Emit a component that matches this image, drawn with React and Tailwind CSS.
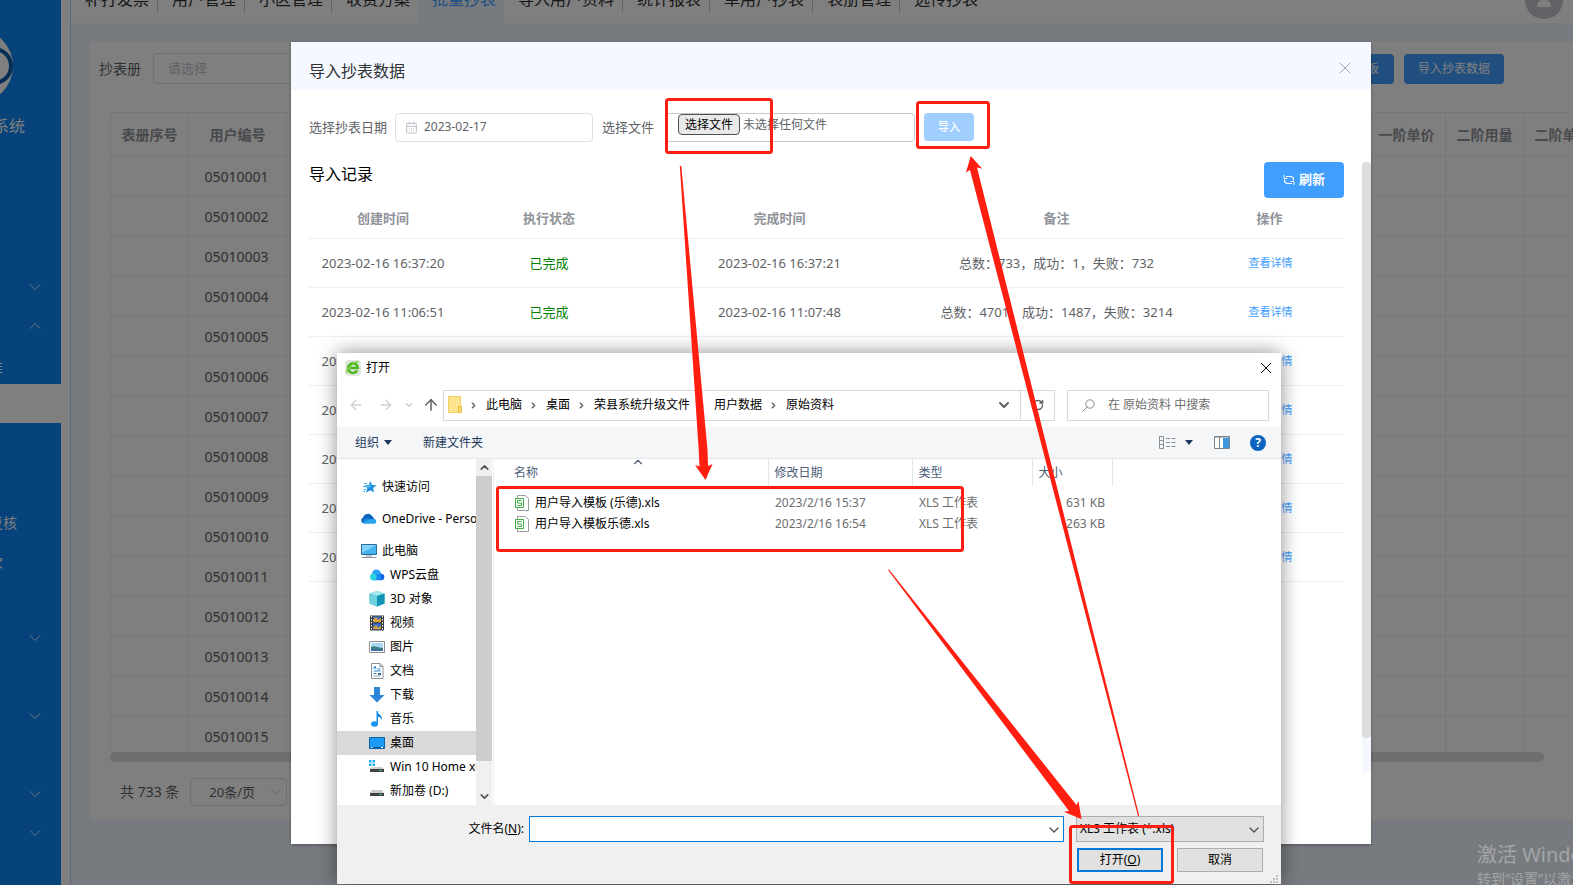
import { useState } from "react";
import { ArrowLeft, ArrowRight, ArrowUp, CalendarDays, ChevronDown, ChevronRight, ChevronUp, RotateCw, X } from "lucide-react";

const tabs = [
  { label: "补打发票" },
  { label: "用户管理" },
  { label: "小区管理" },
  { label: "收费方案", last: true },
  { label: "批量抄表", active: true },
  { label: "导入用户资料" },
  { label: "统计报表" },
  { label: "单用户抄表" },
  { label: "表册管理" },
  { label: "远传抄表", last: true },
];

const menuRows = [
  { arrow: "down" },
  { arrow: "up" },
  { label: "准", labelWidth: "w-[3px]" },
  { active: true },
  {},
  {},
  { label: "复核", labelWidth: "w-[17px]" },
  { label: "次", labelWidth: "w-[3px]" },
  {},
  { arrow: "down" },
  {},
  { arrow: "down" },
  {},
  { arrow: "down" },
  { arrow: "down" },
];

const userCodes = Array.from({ length: 15 }, (_, i) => String(5010001 + i).padStart(8, "0"));

const records = [
  { created: "2023-02-16 16:37:20", finished: "2023-02-16 16:37:21", total: 733, ok: 1, failed: 732 },
  { created: "2023-02-16 11:06:51", finished: "2023-02-16 11:07:48", total: 4701, ok: 1487, failed: 3214 },
  { created: "2023-02-15 17:20:11" },
  { created: "2023-02-15 16:42:35" },
  { created: "2023-02-15 15:08:27" },
  { created: "2023-02-15 10:31:02" },
  { created: "2023-02-14 16:55:49" },
];

const files = [
  { name: "用户导入模板 (乐德).xls", date: "2023/2/16 15:37", type: "XLS 工作表", size: "631 KB" },
  { name: "用户导入模板乐德.xls", date: "2023/2/16 16:54", type: "XLS 工作表", size: "263 KB" },
];

const crumbs = ["此电脑", "桌面", "荣县系统升级文件", "用户数据", "原始资料"];

const treeIcons = {
  star: (
    <>
      <path d="M9.500 2l1.600 4 4.400.2-3.400 2.800 1 4.500-3.800-2.200-4.300 2.400 1.300-4.500L3.500 6.500l4.200-.4z" fill="#1f8fdf" />
      <path d="M9.500 2l.2 5.500-3.400 1.700L3.500 6.500l4.200-.4z" fill="#4db4f2" />
      <path d="M3.500 4.500H6M2 7.500h2M2.500 10.500H5M2.500 12.500H4" stroke="#3aa7ec" />
    </>
  ),
  onedrive: (
    <>
      <path d="M3 12.500a3 3 0 01-1-5.700 5 5 0 019-1.800 4 4 0 012 3.500z" fill="#0a63bd" />
      <path d="M3.500 12.500a3.200 3.200 0 01.5-5l3-.5 3 1.500 3-.700a2.500 2.500 0 01.5 4.700z" fill="#1583dc" />
      <path d="M2 11.500L9 8l5 .500a2.100 2.100 0 01-.5 4H3.500z" fill="#2ba4f1" />
    </>
  ),
  pc: (
    <>
      <path d="M.500 1.500h15v10H.500z" fill="#45b3f2" stroke="#2a6d9c" />
      <path d="M1 2h14L1 10z" fill="#7fd2fb" />
      <path d="M5 13h6M.500 14.500h15" stroke="#8495a3" />
    </>
  ),
  wps: (
    <>
      <circle cx="7.500" cy="7" r="4.500" fill="#2aa5f7" />
      <circle cx="12" cy="10" r="3.300" fill="#1160e8" />
      <path d="M5 8l7-1.300v6.600H4z" fill="#1489f3" />
      <circle cx="4.300" cy="10" r="3.300" fill="#26d5de" />
    </>
  ),
  cube: (
    <>
      <path d="M8 0l7.500 2.500v10L8 15.500.500 12.500v-10z" fill="#27b5cf" />
      <path d="M8 0l7.500 2.500L8 5 .500 2.500z" fill="#a5e8ee" />
      <path d="M.500 2.500L8 5v10.500L.500 12.500z" fill="#6fd3df" />
      <path d="M8 5l7.500-2.500v10L8 15.500z" fill="#1193b5" />
    </>
  ),
  video: (
    <>
      <path d="M1 .500h14v15H1z" fill="#3b3b3b" />
      <path d="M4 1.500h8v6H4zM4 8.500h8v6H4z" fill="#3f70c4" />
      <path d="M4 5l3-3 2 3 3-2v4H4zM4 13l3-3 2 3 3-2v3H4z" fill="#e0a332" />
      <path d="M2.500 1v14M13.500 1v14" stroke="#fff" strokeDasharray="1.500 1.500" />
    </>
  ),
  picture: (
    <>
      <path d="M.500 2.500h15v11H.500z" fill="#fff" stroke="#8b8f93" />
      <path d="M2 4h12v8H2z" fill="#a8d8f5" />
      <path d="M2 8c3-2 5 0 12 1v3H2z" fill="#3e7d7b" />
      <path d="M2 10c4 0 7 0 12 1v1H2z" fill="#3a6fae" />
    </>
  ),
  doc: (
    <>
      <path d="M2.500.500h8.500l3 3v12H2.500z" fill="#fff" stroke="#8b8f93" />
      <path d="M11 .500v3h3" fill="none" stroke="#8b8f93" />
      <path d="M4.500 6l1.500-3 1 3M4.500 8h7M8.500 6h3M4.500 10.500h3" fill="none" stroke="#2a83c9" />
      <path d="M4.500 13h7" stroke="#9aa0a6" />
      <path d="M9 10h3v2H9z" fill="#2f6f8f" />
    </>
  ),
  download: <path d="M5 0h6v8h4.500L8 15.500.500 8H5z" fill="#2d87d8" />,
  music: (
    <>
      <path d="M8.500 0c0 3.500 5 4 4.500 9-.7-2-2-3-4.500-3.500z" fill="#0b79d4" />
      <path d="M7.500 0h1.500v12H7.500z" fill="#1793ef" />
      <ellipse cx="5.500" cy="13" rx="3.500" ry="2.700" fill="#1793ef" />
    </>
  ),
  desktop: (
    <>
      <path d="M.500 2.500h15v11H.500z" fill="#1e9bf5" stroke="#0f62a3" />
      <path d="M1 12.500h14" stroke="#0b5fa8" />
      <path d="M2 12.500h1.500M12 12.500h2" stroke="#fff" />
    </>
  ),
  winDrive: (
    <>
      <path d="M0 1h2.500v2.500H0zM3.500 1H6v2.500H3.500zM0 4.500h2.500V7H0zM3.500 4.500H6V7H3.500z" fill="#19b0f0" />
      <path d="M3 8h10l2 2H1z" fill="#c9cbcd" />
      <path d="M1 10h14v3H1z" fill="#3f4347" />
      <path d="M10.500 11.500h2" stroke="#41e05f" />
    </>
  ),
  drive: (
    <>
      <path d="M3 7h10l2 3H1z" fill="#c9cbcd" />
      <path d="M1 10h14v3H1z" fill="#3f4347" />
      <path d="M10.500 11.500h2" stroke="#41e05f" />
    </>
  ),
};

const treeRoots = [
  { icon: "star", label: "快速访问" },
  { icon: "onedrive", label: "OneDrive - Personal" },
  { icon: "pc", label: "此电脑" },
];

const treeItems = [
  { icon: "wps", label: "WPS云盘" },
  { icon: "cube", label: "3D 对象" },
  { icon: "video", label: "视频" },
  { icon: "picture", label: "图片" },
  { icon: "doc", label: "文档" },
  { icon: "download", label: "下载" },
  { icon: "music", label: "音乐" },
  { icon: "desktop", label: "桌面", active: true },
  { icon: "winDrive", label: "Win 10 Home x64 (C:)" },
  { icon: "drive", label: "新加卷 (D:)" },
];

const TreeIcon = ({ name }) => (
  <svg viewBox="0 0 16 16" className="h-4 w-4 shrink-0" aria-hidden="true">
    {treeIcons[name]}
  </svg>
);

const Sidebar = () => (
  <aside className="w-[61px] shrink-0 overflow-hidden bg-[#0a86f4] text-white">
    <svg viewBox="0 0 61 76" className="mt-7 block h-[76px] w-[61px]" aria-hidden="true">
      <circle cx="-24" cy="38" r="37" fill="#fff" />
      <circle cx="-6" cy="38" r="17" fill="none" stroke="#0a5fa8" strokeWidth="4" />
    </svg>
    <div className="mt-3 flex w-[25px] justify-end text-base leading-5 whitespace-nowrap">系统</div>
    <nav className="mt-[131px]">
      {menuRows.map((row, i) => (
        <div
          key={i}
          className={`flex h-[39px] items-center justify-between pr-4 ${row.active ? "bg-white" : ""}`}
        >
          {row.label && (
            <a href="#" className={`flex justify-end pt-1 text-sm leading-5 whitespace-nowrap ${row.labelWidth}`}>
              {row.label}
            </a>
          )}
          {row.arrow === "down" && <ChevronDown className="ml-auto h-5 w-5" strokeWidth={1} />}
          {row.arrow === "up" && <ChevronUp className="ml-auto h-5 w-5" strokeWidth={1} />}
        </div>
      ))}
    </nav>
  </aside>
);

const TopBar = () => (
  <header className="flex h-[23px] items-end justify-between overflow-hidden bg-white">
    <nav className="flex items-end">
      {tabs.map((tab) => (
        <a
          key={tab.label}
          href="#"
          className={`pb-[11px] ${tab.active ? "bg-[#eef6ff] text-[#409eff]" : "text-[#303133]"}`}
        >
          <span
            className={`block pr-2 pb-[5px] pl-[14px] text-base leading-4 whitespace-nowrap ${
              tab.active || tab.last ? "" : "border-r border-[#c0c4cc]"
            }`}
          >
            {tab.label}
          </span>
        </a>
      ))}
    </nav>
    <svg viewBox="0 0 38 38" className="mr-[10px] mb-1 h-[38px] w-[38px] shrink-0" aria-hidden="true">
      <circle cx="19" cy="19" r="19" fill="#c0c4cc" />
      <circle cx="19" cy="14" r="5" fill="#fff" />
      <path d="M12 25v-1c0-3 3-5 7-5s7 2 7 5v1q0 1-1 1H13q-1 0-1-1z" fill="#fff" />
    </svg>
  </header>
);

const MeterPage = () => (
  <section className="mt-[19px] ml-[19px] overflow-hidden bg-white pb-[14px] text-[#606266]">
    <div className="flex items-center justify-between pt-[11px] pr-[69px] pl-[9px]">
      <div className="flex items-center gap-3">
        <label htmlFor="book" className="text-sm leading-5">
          抄表册
        </label>
        <select
          id="book"
          className="h-[31px] w-[200px] appearance-none rounded border border-[#dcdfe6] bg-white pl-[14px] text-[13px] text-[#c0c4cc]"
        >
          <option>请选择</option>
        </select>
      </div>
      <div className="flex gap-[10px]">
        <button type="button" className="h-[30px] rounded-sm bg-[#409eff] px-[15px] text-xs text-white">
          下载模板
        </button>
        <button type="button" className="h-[30px] rounded-sm bg-[#409eff] px-[14px] text-xs text-white">
          导入抄表数据
        </button>
      </div>
    </div>

    <div className="mt-7 ml-5 h-[640px] overflow-hidden">
      <table className="w-[1492px] table-fixed border-collapse text-center text-sm">
        <colgroup>
          <col className="w-[78px]" />
          <col className="w-[98px]" />
          <col />
          <col className="w-[78px]" />
          <col className="w-[78px]" />
          <col className="w-[78px]" />
        </colgroup>
        <thead>
          <tr className="h-[44px] text-[#909399]">
            {["表册序号", "用户编号", "", "一阶单价", "二阶用量", "二阶单价"].map((title, i) => (
              <th key={i} className="border border-[#ebeef5] p-0 leading-5 font-bold whitespace-nowrap">
                {title}
              </th>
            ))}
          </tr>
        </thead>
        <tbody>
          {userCodes.map((code) => (
            <tr key={code} className="h-10">
              <td className="border border-[#ebeef5] p-0" />
              <td className="border border-[#ebeef5] p-0 pr-[2px] leading-5">{code}</td>
              <td className="border border-[#ebeef5] p-0" />
              <td className="border border-[#ebeef5] p-0" />
              <td className="border border-[#ebeef5] p-0" />
              <td className="border border-[#ebeef5] p-0" />
            </tr>
          ))}
        </tbody>
      </table>
    </div>
    <div className="mr-[29px] ml-5 h-[10px] rounded-full bg-[#dddddd]" />

    <div className="mt-4 ml-[30px] flex items-center gap-[11px] text-sm">
      <span className="leading-5">共 733 条</span>
      <div className="relative">
        <select
          aria-label="每页条数"
          className="block h-7 w-[97px] appearance-none rounded border border-[#dcdfe6] bg-white pl-[18px] text-[13px]"
        >
          <option>20条/页</option>
        </select>
        <ChevronDown
          className="pointer-events-none absolute top-[5px] right-[2px] h-[18px] w-[18px] text-[#c0c4cc]"
          strokeWidth={1}
        />
      </div>
    </div>
  </section>
);

const ImportModal = () => {
  const [date, setDate] = useState("2023-02-17");

  return (
    <div className="absolute inset-0 pt-[42px] pr-[202px] pl-[291px]">
      <section className="bg-white pb-[72px] text-[13px] text-[#606266] shadow-[0_1px_3px_rgba(0,0,0,0.3)]">
        <div className="flex h-12 items-center justify-between bg-[#f5f9ff] pr-4 pl-[18px]">
          <h2 className="pt-[10px] text-base leading-6 text-[#303133]">导入抄表数据</h2>
          <button type="button" aria-label="关闭" className="pt-1 text-[#909399]">
            <X className="h-5 w-5" strokeWidth={1} />
          </button>
        </div>

        <form className="flex h-[72px] items-center pt-[2px] pl-[18px]" onSubmit={(e) => e.preventDefault()}>
          <label htmlFor="read-date" className="w-[86px] leading-5 whitespace-nowrap">
            选择抄表日期
          </label>
          <div className="flex h-[29px] w-[198px] items-center gap-[6px] rounded-sm border border-[#dcdfe6] pl-[9px]">
            <CalendarDays className="h-[13px] w-[13px] shrink-0 text-[#c0c4cc]" />
            <input
              id="read-date"
              type="text"
              value={date}
              onChange={(e) => setDate(e.target.value)}
              className="w-40 text-xs leading-5 outline-none"
            />
          </div>
          <label htmlFor="read-file" className="ml-[9px] w-[63px] leading-5 whitespace-nowrap">
            选择文件
          </label>
          <label
            htmlFor="read-file"
            className="relative flex h-[29px] w-[250px] items-start gap-[3px] rounded border border-[#c8c8c8] pl-3 text-xs"
          >
            <input id="read-file" type="file" className="sr-only" />
            <span className="rounded-sm border border-[#505050] bg-[#e9e9e9] px-[6px] leading-[19px] text-black">
              选择文件
            </span>
            <span className="leading-[21px]">未选择任何文件</span>
          </label>
          <button type="submit" className="ml-[9px] h-7 w-[50px] rounded-sm bg-[#a0cfff] text-[11px] font-medium text-white">
            导入
          </button>
        </form>

        <div className="flex h-[610px]">
          <div className="grow pr-[18px] pl-[18px]">
            <div className="flex items-start justify-between">
              <h3 className="text-base leading-6 text-black">导入记录</h3>
              <button
                type="button"
                className="flex h-9 w-20 items-center justify-center gap-1 rounded-sm bg-[#409eff] text-[13px] font-bold text-white"
              >
                <svg viewBox="0 0 12 12" className="h-3 w-3" fill="none" stroke="currentColor" aria-hidden="true">
                  <path d="M3 2.500h4.500a3 3 0 013 3v1M9 9.500H4.500a3 3 0 01-3-3v-1" strokeWidth="1.200" />
                  <path d="M1 1v3.500h3.500M11 11V7.500H7.500" />
                </svg>
                刷新
              </button>
            </div>
            <table className="w-full table-fixed text-center">
              <colgroup>
                <col className="w-[148px]" />
                <col className="w-[184px]" />
                <col />
                <col />
                <col className="w-[149px]" />
              </colgroup>
              <thead>
                <tr className="h-10 border-b border-[#ebeef5] text-[#909399]">
                  {["创建时间", "执行状态", "完成时间", "备注", "操作"].map((title) => (
                    <th key={title} className="p-0 leading-5 font-bold">
                      {title}
                    </th>
                  ))}
                </tr>
              </thead>
              <tbody>
                {records.map((item) => (
                  <tr key={item.created} className="h-[49px] border-b border-[#ebeef5]">
                    <td className="p-0 leading-5 whitespace-nowrap">{item.created}</td>
                    <td className="p-0 leading-5 text-[#008000]">{item.finished && "已完成"}</td>
                    <td className="p-0 leading-5">{item.finished}</td>
                    <td className="p-0 leading-5 whitespace-nowrap">
                      {item.finished && `总数：${item.total}，成功：${item.ok}，失败：${item.failed}`}
                    </td>
                    <td className="p-0 pl-[2px] leading-5">
                      <a href="#" className="text-[11px] text-[#409eff]">
                        查看详情
                      </a>
                    </td>
                  </tr>
                ))}
              </tbody>
            </table>
          </div>
          <div className="w-[9px] shrink-0 bg-[#f5f9ff]">
            <div className="h-[576px] rounded bg-[#dddddd]" />
          </div>
        </div>
      </section>
    </div>
  );
};

const FileDialog = () => {
  const [fileName, setFileName] = useState("");

  return (
    <section className="absolute top-[353px] left-[337px] w-[944px] bg-white text-xs text-black shadow-[0_0_18px_rgba(0,0,0,0.45)]">
      {/* title bar */}
      <div className="flex h-[30px] items-center gap-[5px] pr-[9px] pl-2">
        <svg viewBox="0 0 16 16" className="h-4 w-4" aria-hidden="true">
          <rect x="0" y="0" width="16" height="16" rx="4" fill="#dfe6df" />
          <path d="M12.200 10.500A4.800 4.800 0 1112.800 8H5" fill="none" stroke="#4fb81f" strokeWidth="2.600" />
          <path d="M1.500 13c0-4 7-11 12-11.500" fill="none" stroke="#7ad13a" strokeWidth="1.300" />
        </svg>
        <h2 className="grow leading-5">打开</h2>
        <button type="button" aria-label="关闭">
          <svg viewBox="0 0 12 12" className="h-3 w-3" stroke="#000" aria-hidden="true">
            <path d="M1 1l10 10M11 1L1 11" />
          </svg>
        </button>
      </div>

      {/* address bar */}
      <div className="flex h-11 items-center pr-3 pl-[11px]">
        <div className="flex w-[95px] items-center text-[#cfcfcf]">
          <ArrowLeft className="h-4 w-4 shrink-0" strokeWidth={2} />
          <ArrowRight className="ml-[14px] h-4 w-4 shrink-0" strokeWidth={2} />
          <ChevronDown className="ml-[10px] h-[10px] w-[10px] shrink-0" strokeWidth={4} />
          <ArrowUp className="ml-2 h-[18px] w-[18px] shrink-0 text-[#606060]" strokeWidth={2} />
        </div>
        <div className="flex h-[31px] w-[612px] items-center border border-[#d9d9d9]">
          <svg viewBox="0 0 14 18" className="ml-1 h-[18px] w-[14px]" aria-hidden="true">
            <path d="M.500.500h12v16H.500z" fill="#ffe48f" stroke="#f3cf62" />
            <path d="M10.500 10.500h3v6h-3z" fill="#ffdc73" stroke="#e9be43" />
          </svg>
          <ol className="flex grow items-center">
            {crumbs.map((name) => (
              <li key={name} className="flex items-center leading-5">
                <ChevronRight className="mr-2 ml-[7px] h-[9px] w-[9px] text-[#606060]" strokeWidth={4} />
                {name}
              </li>
            ))}
          </ol>
          <ChevronDown className="mr-2 h-4 w-4 text-[#606060]" strokeWidth={3} />
          <button type="button" aria-label="刷新" className="flex h-full w-[34px] items-center justify-center border-l border-[#d9d9d9]">
            <RotateCw className="h-3 w-3 text-[#606060]" strokeWidth={3} />
          </button>
        </div>
        <div className="ml-3 flex h-[31px] grow items-center gap-[13px] border border-[#d9d9d9] pl-[14px]">
          <svg viewBox="0 0 13 13" className="h-[13px] w-[13px] shrink-0" fill="none" stroke="#8a8a8a" aria-hidden="true">
            <circle cx="8" cy="5" r="4.200" />
            <path d="M5 8L.500 12.500" />
          </svg>
          <input
            type="text"
            aria-label="搜索"
            placeholder="在 原始资料 中搜索"
            className="w-36 leading-5 outline-none placeholder:text-[#6d6d6d]"
          />
        </div>
      </div>

      {/* toolbar */}
      <div className="flex h-8 items-center border-b border-[#e3e6ea] bg-[#f5f6f7] pr-[15px] pl-[18px] text-[#1e395b]">
        <button type="button" className="flex items-center gap-[5px] leading-5">
          组织
          <svg viewBox="0 0 8 5" className="h-[5px] w-2" aria-hidden="true">
            <path d="M0 0h8L4 5z" fill="#1e395b" />
          </svg>
        </button>
        <button type="button" className="ml-[31px] leading-5">
          新建文件夹
        </button>
        <div className="ml-auto flex items-center">
          <svg viewBox="0 0 17 14" className="h-[14px] w-[17px]" fill="none" stroke="#8a8f94" aria-hidden="true">
            <path d="M.500.500h4v12h-4zM.500 4.500h4M.500 8.500h4M7 2.500h4M12.500 2.500h4M7 6.500h4M12.500 6.500h4M7 10.500h4M12.500 10.500h4" />
          </svg>
          <svg viewBox="0 0 8 5" className="ml-[9px] h-[5px] w-2" aria-hidden="true">
            <path d="M0 0h8L4 5z" fill="#1e395b" />
          </svg>
          <svg viewBox="0 0 16 13" className="ml-[21px] h-[13px] w-4" aria-hidden="true">
            <path d="M.500.500h15v12H.500z" fill="#fff" stroke="#7d8489" />
            <path d="M0 1h16M5.500 1v12" stroke="#7d8489" />
            <path d="M9 2h6v10H9z" fill="#3d97de" />
          </svg>
          <button
            type="button"
            className="ml-5 flex h-4 w-4 items-center justify-center rounded-full bg-[#0a64c0] text-xs font-bold text-white"
          >
            ?
          </button>
        </div>
      </div>

      <div className="flex h-[346px]">
        {/* folder tree */}
        <div className="w-[139px] shrink-0 overflow-hidden pt-4 leading-6 whitespace-nowrap">
          <ul className="flex flex-col gap-2">
            {treeRoots.map((item) => (
              <li key={item.label} className="flex h-6 items-center gap-[5px] pl-6">
                <TreeIcon name={item.icon} />
                {item.label}
              </li>
            ))}
          </ul>
          <ul>
            {treeItems.map((item) => (
              <li
                key={item.label}
                className={`flex h-6 items-center gap-[5px] pl-8 ${item.active ? "bg-[#d9d9d9]" : ""}`}
              >
                <TreeIcon name={item.icon} />
                {item.label}
              </li>
            ))}
          </ul>
        </div>
        <div className="flex w-4 shrink-0 flex-col items-center bg-[#f0f0f0] text-[#505050]">
          <ChevronUp className="my-[2px] h-[13px] w-[13px] shrink-0" strokeWidth={3} />
          <div className="h-[285px] w-full bg-[#cdcdcd]" />
          <ChevronDown className="mt-auto mb-[2px] h-[13px] w-[13px] shrink-0" strokeWidth={3} />
        </div>

        {/* file list */}
        <div className="ml-px grow border-l border-[#f0f0f0]">
          <table className="table-fixed">
            <colgroup>
              <col className="w-[274px]" />
              <col className="w-36" />
              <col className="w-[120px]" />
              <col className="w-20" />
            </colgroup>
            <thead>
              <tr className="h-[27px] text-left text-[#4c607a]">
                <th className="relative border-r border-[#e5e5e5] p-0 pl-5 font-normal">
                  名称
                  <ChevronUp className="absolute -top-1 left-[137px] h-[14px] w-[14px]" strokeWidth={2} />
                </th>
                <th className="border-r border-[#e5e5e5] p-0 pl-[6px] font-normal">修改日期</th>
                <th className="border-r border-[#e5e5e5] p-0 pl-[6px] font-normal">类型</th>
                <th className="border-r border-[#e5e5e5] p-0 pl-[6px] font-normal">大小</th>
              </tr>
            </thead>
            <tbody className="text-[#6d6d6d] before:block before:h-[6px]">
              {files.map((file) => (
                <tr key={file.name} className="h-[21px]">
                  <td className="p-0 pl-[21px] text-black">
                    <span className="flex items-center gap-[6px]">
                      <svg viewBox="0 0 14 16" className="h-4 w-[14px]" fill="none" aria-hidden="true">
                        <path d="M2.500 3V.500h8l3 3v12h-11V13" fill="#fff" stroke="#9b9b9b" />
                        <path d="M.500 3.500h8v9h-8z" fill="#fff" stroke="#3fae49" />
                        <path d="M6.500 5.500h-4v2.500h4v2.500h-4" stroke="#3fae49" />
                      </svg>
                      {file.name}
                    </span>
                  </td>
                  <td className="p-0 pl-[7px]">{file.date}</td>
                  <td className="p-0 pl-[7px]">{file.type}</td>
                  <td className="p-0 pr-[7px] text-right">{file.size}</td>
                </tr>
              ))}
            </tbody>
          </table>
        </div>
      </div>

      {/* footer */}
      <div className="bg-[#f0f0f0] pt-[11px] pr-[17px] pb-3">
        <div className="flex items-center">
          <label htmlFor="file-name" className="w-[192px] pr-[5px] text-right leading-5">
            文件名(<u>N</u>):
          </label>
          <div className="relative grow">
            <input
              id="file-name"
              type="text"
              value={fileName}
              onChange={(e) => setFileName(e.target.value)}
              className="block h-[26px] w-full border border-[#0078d7] bg-white px-1 outline-none"
            />
            <ChevronDown className="absolute top-[6px] right-[2px] h-4 w-4 text-[#505050]" strokeWidth={2} />
          </div>
          <div className="relative ml-3">
            <select
              aria-label="文件类型"
              className="block h-[26px] w-[188px] appearance-none border border-[#adadad] bg-[#e1e1e1] pl-[3px]"
            >
              <option>XLS 工作表 (*.xls)</option>
            </select>
            <ChevronDown
              className="pointer-events-none absolute top-[6px] right-[2px] h-4 w-4 text-[#505050]"
              strokeWidth={2}
            />
          </div>
        </div>
        <div className="mt-[6px] flex justify-end gap-[14px] pr-px">
          <button type="button" className="h-6 w-[86px] border-2 border-[#0078d7] bg-[#e1e1e1]">
            打开(<u>O</u>)
          </button>
          <button type="button" className="h-6 w-[86px] border border-[#adadad] bg-[#e1e1e1]">
            取消
          </button>
        </div>
      </div>
      <svg viewBox="0 0 8 8" className="absolute right-[3px] bottom-[1px] h-2 w-2" fill="#bfbfbf" aria-hidden="true">
        <path d="M6 0h2v2H6zM3 3h2v2H3zM6 3h2v2H6zM0 6h2v2H0zM3 6h2v2H3zM6 6h2v2H6z" />
      </svg>
    </section>
  );
};

// Red marks that lead the reader through the import steps
const Annotations = () => (
  <svg className="pointer-events-none absolute inset-0 h-full w-full" aria-hidden="true">
    <g fill="none" stroke="#ff1e10" strokeWidth="3">
      <rect x="666.500" y="99.500" width="105" height="53" rx="2" />
      <rect x="917.500" y="102.500" width="71" height="45" rx="2" />
      <rect x="497.500" y="487.500" width="465" height="63" rx="2" />
      <rect x="1070.500" y="826.500" width="102" height="56" rx="2" />
    </g>
    <g fill="#ff1e10">
      <path d="M679.800 166h1.500L707.500 450l.5 16 4.500-2-7 16-10.500-15 4.500 1.500-.8-16.500z" />
      <path d="M888 570l1-.5L1076.500 805l2-3.700 3 18-17.500-7.500 5-.8z" />
      <path d="M1138 816l1.200-.2L977 167.500l5 1-11.300-12.500-4.700 16.500 4-2.500z" />
    </g>
  </svg>
);

const App = () => (
  <div className='relative min-h-screen overflow-hidden bg-white font-["Noto_Sans","Noto_Sans_CJK_SC",sans-serif]'>
    <div className="flex h-screen">
      <Sidebar />
      <main className="ml-[9px] min-w-0 grow border-l border-[#b3d8ff] bg-[#eff7ff]">
        <TopBar />
        <MeterPage />
      </main>
    </div>

    <div className="absolute inset-0 bg-black/50" />
    <div className="absolute right-0 bottom-0 h-[42px] w-24 overflow-hidden whitespace-nowrap text-[#a3a5a7]">
      <p className="text-xl leading-6">激活 Windows</p>
      <p className="text-sm leading-6">转到“设置”以激活 Windows。</p>
    </div>

    <ImportModal />
    <FileDialog />
    <Annotations />
  </div>
);

export default App;
